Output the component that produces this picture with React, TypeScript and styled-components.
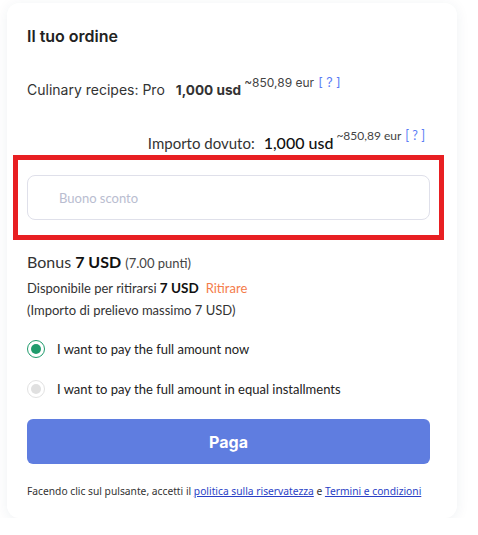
import React from "react";
import styled, { createGlobalStyle } from "styled-components";

const Global = createGlobalStyle`
  html, body { margin: 0; padding: 0; background: #fff; }
  body { font-family: Inter, "Liberation Sans", sans-serif; }
`;

const Card = styled.div`
  margin: 3px 0 0 7px;
  width: 450px;
  height: 515px;
  box-sizing: border-box;
  background: #fff;
  border-radius: 12px;
  box-shadow: 0 2px 14px rgba(30, 50, 90, 0.07);
  padding: 23px 0 0 20px;
  display: flex;
  flex-direction: column;
`;

const Title = styled.h2`
  margin: 0;
  font-family: Inter, sans-serif;
  font-weight: 600;
  font-size: 16px;
  line-height: 20px;
  color: #222;
`;

const ProductRow = styled.div`
  margin-top: 30px;
  display: flex;
  align-items: flex-start;
  font-family: Inter, sans-serif;
  color: #333;
  font-size: 14px;
  line-height: 20px;
  padding-top: 4px;
`;

const Price = styled.span<{ $lato?: boolean }>`
  font-weight: ${(p) => (p.$lato ? 500 : 700)};
  font-size: ${(p) => (p.$lato ? "16px" : "13.6px")};
  color: ${(p) => (p.$lato ? "#111" : "#333")};
  margin-left: ${(p) => (p.$lato ? "9px" : "11px")};
  line-height: 20px;
`;

const Approx = styled.sup`
  font-size: 12px;
  line-height: 12px;
  color: #444;
  margin-left: 3px;
  position: relative;
  top: -3px;
  vertical-align: baseline;
`;

const Help = styled.span`
  color: #5b7cf5;
  margin-left: 4px;
  font-size: 12.5px;
`;

const DueRow = styled.div`
  margin-top: 29px;
  margin-right: 32px;
  display: flex;
  justify-content: flex-end;
  align-items: flex-start;
  font-family: Lato, sans-serif;
  font-size: 15px;
  color: #333;
  line-height: 20px;
  padding-top: 4px;
`;

const Highlight = styled.div`
  margin: 2px 0 0 -14px;
  width: 431px;
  height: 85px;
  box-sizing: border-box;
  border: 5px solid #e81f22;
  padding: 15px 8px 0 9px;
`;

const Input = styled.input`
  display: block;
  width: 403px;
  height: 45px;
  box-sizing: border-box;
  border: 1px solid #dfe0ea;
  border-radius: 8px;
  padding: 0 0 0 31px;
  font-family: Lato, sans-serif;
  font-size: 13px;
  color: #333;
  outline: none;
  &::placeholder { color: #b9bdd0; }
`;

const Bonus = styled.div`
  margin: 11px 0 3px;
  font-family: Lato, sans-serif;
  font-size: 16px;
  line-height: 22px;
  color: #333;
  b { font-weight: 700; color: #111; }
  small { font-size: 13px; color: #444; }
`;

const Line = styled.div`
  font-family: Lato, sans-serif;
  font-size: 13px;
  line-height: 22px;
  color: #333;
  b { font-weight: 700; color: #111; font-size: 13.5px; }
`;

const Withdraw = styled.span`
  color: #f47c4a;
  margin-left: 7px;
  font-size: 13px;
`;

const Options = styled.div`
  margin-top: 18px;
  display: flex;
  flex-direction: column;
  gap: 20px;
`;

const Option = styled.label`
  display: flex;
  align-items: center;
  gap: 12px;
  font-family: Lato, sans-serif;
  font-size: 13px;
  color: #222;
  height: 20px;
`;

const Radio = styled.span<{ $on?: boolean }>`
  width: 18px;
  height: 18px;
  box-sizing: border-box;
  border-radius: 50%;
  border: 1.5px solid ${(p) => (p.$on ? "#1f9b6c" : "#e2e2e2")};
  display: flex;
  align-items: center;
  justify-content: center;
  &::after {
    content: "";
    width: 10px;
    height: 10px;
    border-radius: 50%;
    background: ${(p) => (p.$on ? "#1f9b6c" : "#e0e0e0")};
  }
`;

const PayButton = styled.button`
  margin-top: 20px;
  width: 403px;
  height: 45px;
  border: none;
  border-radius: 6px;
  background: #5f7de0;
  color: #fff;
  font-family: Inter, sans-serif;
  font-weight: 700;
  font-size: 16px;
`;

const Terms = styled.p`
  margin: 19px 0 0;
  font-family: "Noto Sans", sans-serif;
  font-size: 10.25px;
  line-height: 16px;
  color: #333;
  a { color: #2a3fc6; text-decoration: underline; }
`;

export default function App() {
  return (
    <>
      <Global />
      <Card>
        <Title>Il tuo ordine</Title>
        <ProductRow>
          Culinary recipes: Pro
          <Price>1,000 usd</Price>
          <Approx>
            ~850,89 eur<Help>[ ? ]</Help>
          </Approx>
        </ProductRow>
        <DueRow>
          Importo dovuto:
          <Price $lato>1,000 usd</Price>
          <Approx>
            ~850,89 eur<Help>[ ? ]</Help>
          </Approx>
        </DueRow>
        <Highlight>
          <Input placeholder="Buono sconto" />
        </Highlight>
        <Bonus>
          Bonus <b>7 USD</b> <small>(7.00 punti)</small>
        </Bonus>
        <Line>
          Disponibile per ritirarsi <b>7 USD</b>
          <Withdraw>Ritirare</Withdraw>
        </Line>
        <Line>(Importo di prelievo massimo 7 USD)</Line>
        <Options>
          <Option>
            <Radio $on />I want to pay the full amount now
          </Option>
          <Option>
            <Radio />I want to pay the full amount in equal installments
          </Option>
        </Options>
        <PayButton>Paga</PayButton>
        <Terms>
          Facendo clic sul pulsante, accetti il <a href="#">politica sulla riservatezza</a> e{" "}
          <a href="#">Termini e condizioni</a>
        </Terms>
      </Card>
    </>
  );
}
